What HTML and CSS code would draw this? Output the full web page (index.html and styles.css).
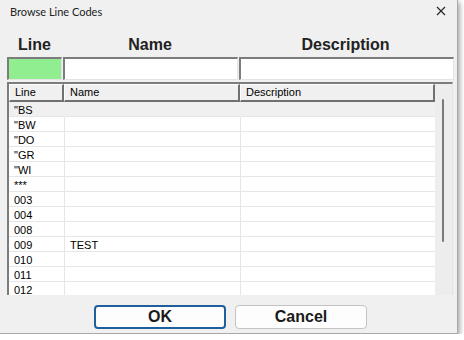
FILE: index.html
```html
<!DOCTYPE html>
<html lang="en">
<head>
    <meta charset="UTF-8">
    <title>Browse Line Codes</title>
    <link rel="stylesheet" href="styles.css">
</head>
<body>
    <div class="window">
        <div class="titlebar">
            <span class="title">Browse Line Codes</span>
            <svg class="close" width="10" height="10" viewBox="0 0 10 10">
                <path d="M1 1 L9 9 M9 1 L1 9" stroke="#222" stroke-width="1.1" fill="none"/>
            </svg>
        </div>

        <div class="labels">
            <span>Line</span>
            <span>Name</span>
            <span>Description</span>
        </div>

        <div class="filters">
            <input class="filter filter-line" type="text">
            <input class="filter filter-name" type="text">
            <input class="filter filter-desc" type="text">
        </div>

        <div class="table">
            <div class="table-main">
                <div class="row head">
                    <div class="cell">Line</div>
                    <div class="cell">Name</div>
                    <div class="cell">Description</div>
                </div>
                <div id="rows"></div>
            </div>
            <div class="scrollbar">
                <div class="thumb"></div>
            </div>
        </div>

        <div class="buttons">
            <button class="btn btn-ok">OK</button>
            <button class="btn">Cancel</button>
        </div>
    </div>

    <script>
        const codes = [
            ['"BS', ''], ['"BW', ''], ['"DO', ''], ['"GR', ''], ['"WI', ''],
            ['***', ''], ['003', ''], ['004', ''], ['008', ''], ['009', 'TEST'],
            ['010', ''], ['011', ''], ['012', '']
        ];

        for (const [line, name] of codes) {
            rows.innerHTML += `
                <div class="row">
                    <div class="cell">${line}</div>
                    <div class="cell">${name}</div>
                    <div class="cell"></div>
                </div>
            `;
        }
        rows.firstElementChild.classList.add('selected');
    </script>
</body>
</html>
```

FILE: styles.css
```css
*, *::before, *::after{
    box-sizing: border-box;
    margin: 0;
    padding: 0;
}

body{
    background: #fff;
    font-family: "Liberation Sans", Arial, sans-serif;
}

.window{
    width: 458px;
    height: 334px;
    background: #f0f0f0;
    border-right: 1px solid #a8a8a8;
    border-bottom: 1px solid #a8a8a8;
    box-shadow: 2px 2px 5px rgba(0, 0, 0, .35);
    display: flex;
    flex-direction: column;
}

.titlebar{
    height: 22px;
    display: flex;
    align-items: center;
    padding: 0 11px 0 10px;
    font-family: Lato, "Noto Sans", sans-serif;
    font-size: 11px;
    color: #222;

    .close{
        margin-left: auto;
    }
}

.labels{
    display: grid;
    grid-template-columns: 55px 176px 215px;
    margin: 13px 0 0 7px;
    height: 22px;
    font-size: 16px;
    font-weight: bold;
    color: #222;
    text-align: center;
    line-height: 20px;
}

.filters{
    display: grid;
    grid-template-columns: 55px 175px 215px;
    gap: 1px;
    margin-left: 7px;
}

.filter{
    height: 23px;
    background: #fff;
    border-top: 2px solid #7c7c7c;
    border-left: 2px solid #7c7c7c;
    border-right: 1px solid #e4e4e4;
    border-bottom: 1px solid #e4e4e4;
    outline: none;
}

.filter-line{
    background: #90ee90;
}

.table{
    display: flex;
    margin: 2px 0 0 7px;
    width: 446px;
    height: 213px;
    background: #fff;
    border-top: 2px solid #7c7c7c;
    border-left: 2px solid #7c7c7c;
    border-right: 1px solid #e4e4e4;
    overflow: hidden;
}

.table-main{
    width: 426px;
    font-size: 11px;
    color: #000;
}

.row{
    display: grid;
    grid-template-columns: 55px 176px 195px;
    height: 15px;
    line-height: 14px;
    border-bottom: 1px solid #e6e6e6;

    .cell{
        padding: 1px 0 0 5px;
        white-space: nowrap;
    }

    .cell + .cell{
        border-left: 1px solid #e6e6e6;
    }
}

.row.selected{
    background: #f0f0f0;

    .cell + .cell{
        border-left-color: #f0f0f0;
    }
}

.row.head{
    height: 18px;
    line-height: 15px;
    background: #f0f0f0;
    border-bottom: none;

    .cell{
        border-top: 1px solid #fff;
        border-left: 1px solid #fff;
        border-right: 2px solid #707070;
        border-bottom: 2px solid #707070;
        padding: 0 0 0 5px;
    }
}

.scrollbar{
    width: 17px;
    background: #ededed;
    position: relative;

    .thumb{
        position: absolute;
        left: 7px;
        top: 15px;
        width: 2px;
        height: 143px;
        border-radius: 1px;
        background: #7a7a7a;
    }
}

.buttons{
    display: flex;
    justify-content: center;
    gap: 9px;
    margin-top: 10px;
    padding-left: 4px;
}

.btn{
    width: 132px;
    height: 24px;
    background: #fdfdfd;
    border: 1px solid #c4c4c4;
    border-radius: 4px;
    font-family: "Liberation Sans", Arial, sans-serif;
    font-size: 16px;
    font-weight: bold;
    color: #1a1a1a;
}

.btn-ok{
    border: 2px solid #1f5f9e;
}
```
